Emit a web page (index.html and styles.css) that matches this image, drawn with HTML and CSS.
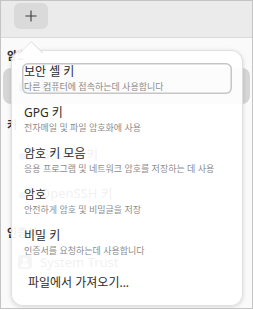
FILE: index.html
```html
<!DOCTYPE html>
<html lang="ko">
<head>
    <meta charset="UTF-8">
    <meta name="viewport" content="width=device-width, initial-scale=1.0">
    <title>암호 및 키</title>
    <link rel="stylesheet" href="styles.css">
</head>
<body>
    <div class="window">
        <header class="headerbar">
            <button class="add-btn" aria-label="추가">
                <svg width="12" height="12" viewBox="0 0 12 12"><path d="M6 0.5v11M0.5 6h11" stroke="#3a3a3a" stroke-width="1.1" fill="none"/></svg>
            </button>
        </header>

        <main class="sidebar">
            <h3 class="section first">암호</h3>
            <div class="row selected">
                <svg class="row-icon" width="14" height="14" viewBox="0 0 14 14"><rect x="1" y="4" width="12" height="9" rx="2" fill="#3584e4"/><path d="M4 4V3a3 3 0 0 1 6 0v1" stroke="#3584e4" stroke-width="1.5" fill="none"/></svg>
                <span>로그인</span>
            </div>
            <h3 class="section">키</h3>
            <div class="row">
                <svg class="row-icon" width="14" height="14" viewBox="0 0 14 14"><circle cx="4.5" cy="9.5" r="3.5" fill="#3584e4"/><path d="M7 7l6-6M11 3l2 2" stroke="#3584e4" stroke-width="1.5"/></svg>
                <span>GnuPG 키</span>
            </div>
            <div class="row">
                <svg class="row-icon" width="14" height="14" viewBox="0 0 14 14"><circle cx="4.5" cy="9.5" r="3.5" fill="#3584e4"/><path d="M7 7l6-6M11 3l2 2" stroke="#3584e4" stroke-width="1.5"/></svg>
                <span>OpenSSH 키</span>
            </div>
            <h3 class="section">인증서</h3>
            <div class="row">
                <svg class="row-icon" width="14" height="14" viewBox="0 0 14 14"><rect x="0" y="0" width="14" height="14" rx="3" fill="#777"/><circle cx="7" cy="5" r="2.3" fill="#fff"/><path d="M3 12a4 4 0 0 1 8 0z" fill="#fff"/></svg>
                <span>System Trust</span>
            </div>
        </main>

        <div class="popover">
            <div class="popover-arrow"></div>
            <ul class="menu">
                <li class="menu-item">
                    <div class="item-body focused">
                        <div class="item-title">보안 셸 키</div>
                        <div class="item-sub">다른 컴퓨터에 접속하는데 사용합니다</div>
                    </div>
                </li>
                <li class="menu-item">
                    <div class="item-body">
                        <div class="item-title">GPG 키</div>
                        <div class="item-sub">전자메일 및 파일 암호화에 사용</div>
                    </div>
                </li>
                <li class="menu-item">
                    <div class="item-body">
                        <div class="item-title">암호 키 모음</div>
                        <div class="item-sub">응용 프로그램 및 네트워크 암호를 저장하는 데 사용</div>
                    </div>
                </li>
                <li class="menu-item">
                    <div class="item-body">
                        <div class="item-title">암호</div>
                        <div class="item-sub">안전하게 암호 및 비밀글을 저장</div>
                    </div>
                </li>
                <li class="menu-item">
                    <div class="item-body">
                        <div class="item-title">비밀 키</div>
                        <div class="item-sub">인증서를 요청하는데 사용합니다</div>
                    </div>
                </li>
                <li class="menu-item import">
                    <div class="item-title">파일에서 가져오기...</div>
                </li>
            </ul>
        </div>
    </div>
</body>
</html>
```

FILE: styles.css
```css
body {
    margin: 0;
    font-family: "Noto Sans", "Noto Sans CJK KR", sans-serif;
    background: #ffffff;
}
.window {
    position: relative;
    box-sizing: border-box;
    width: 253px;
    height: 309px;
    border: 1px solid #c4c4c4;
    background: #fafafa;
    overflow: hidden;
}
.headerbar {
    box-sizing: border-box;
    height: 37px;
    background: #ebebeb;
    border-bottom: 1px solid #dadada;
    padding: 2px 0 0 13px;
}
.add-btn {
    display: flex;
    align-items: center;
    justify-content: center;
    width: 34px;
    height: 26px;
    border: none;
    border-radius: 6px;
    background: #dadada;
    padding: 0;
}
.sidebar {
    padding: 9px 2px 0 2px;
}
.section {
    margin: 12px 0 0 0;
    padding-left: 4px;
    font-size: 11px;
    line-height: 18px;
    font-weight: bold;
    color: #2e2e2e;
}
.section.first {
    margin: 0 0 3px 0;
}
.row {
    display: flex;
    align-items: center;
    gap: 8px;
    height: 39px;
    padding-left: 15px;
    font-size: 13px;
    color: #2e2e2e;
    border-radius: 8px;
}
.row.selected {
    height: 36px;
    background: #d6d6d6;
}
.row-icon {
    flex: none;
}
.popover {
    position: absolute;
    left: 10px;
    top: 49px;
    width: 232px;
    height: 256px;
    box-sizing: border-box;
    background: rgba(255, 255, 255, 0.93);
    border: 1px solid rgba(0, 0, 0, 0.12);
    border-radius: 12px;
    box-shadow: 0 1px 4px rgba(0, 0, 0, 0.15);
}
.popover-arrow {
    position: absolute;
    left: 9px;
    top: -7px;
    width: 18px;
    height: 18px;
    transform: rotate(45deg) scaleX(0.9);
    background: #ffffff;
    border-top: 1px solid rgba(0, 0, 0, 0.14);
    border-left: 1px solid rgba(0, 0, 0, 0.14);
    border-radius: 2px 0 0 0;
}
.menu {
    position: relative;
    list-style: none;
    margin: 0;
    padding: 7px 10px 0 10px;
}
.menu-item {
    padding: 5px 0;
}
.item-body {
    padding: 0 2px;
    border-radius: 6px;
}
.item-body.focused {
    box-shadow: inset 0 0 0 1.5px #c6c6c6;
}
.item-title {
    font-size: 12px;
    line-height: 17px;
    color: #2b2b2b;
}
.item-sub {
    font-size: 9px;
    line-height: 14px;
    color: #8c8c8c;
    white-space: nowrap;
}
.menu-item.import {
    padding: 11px 0 0 6px;
}
```
